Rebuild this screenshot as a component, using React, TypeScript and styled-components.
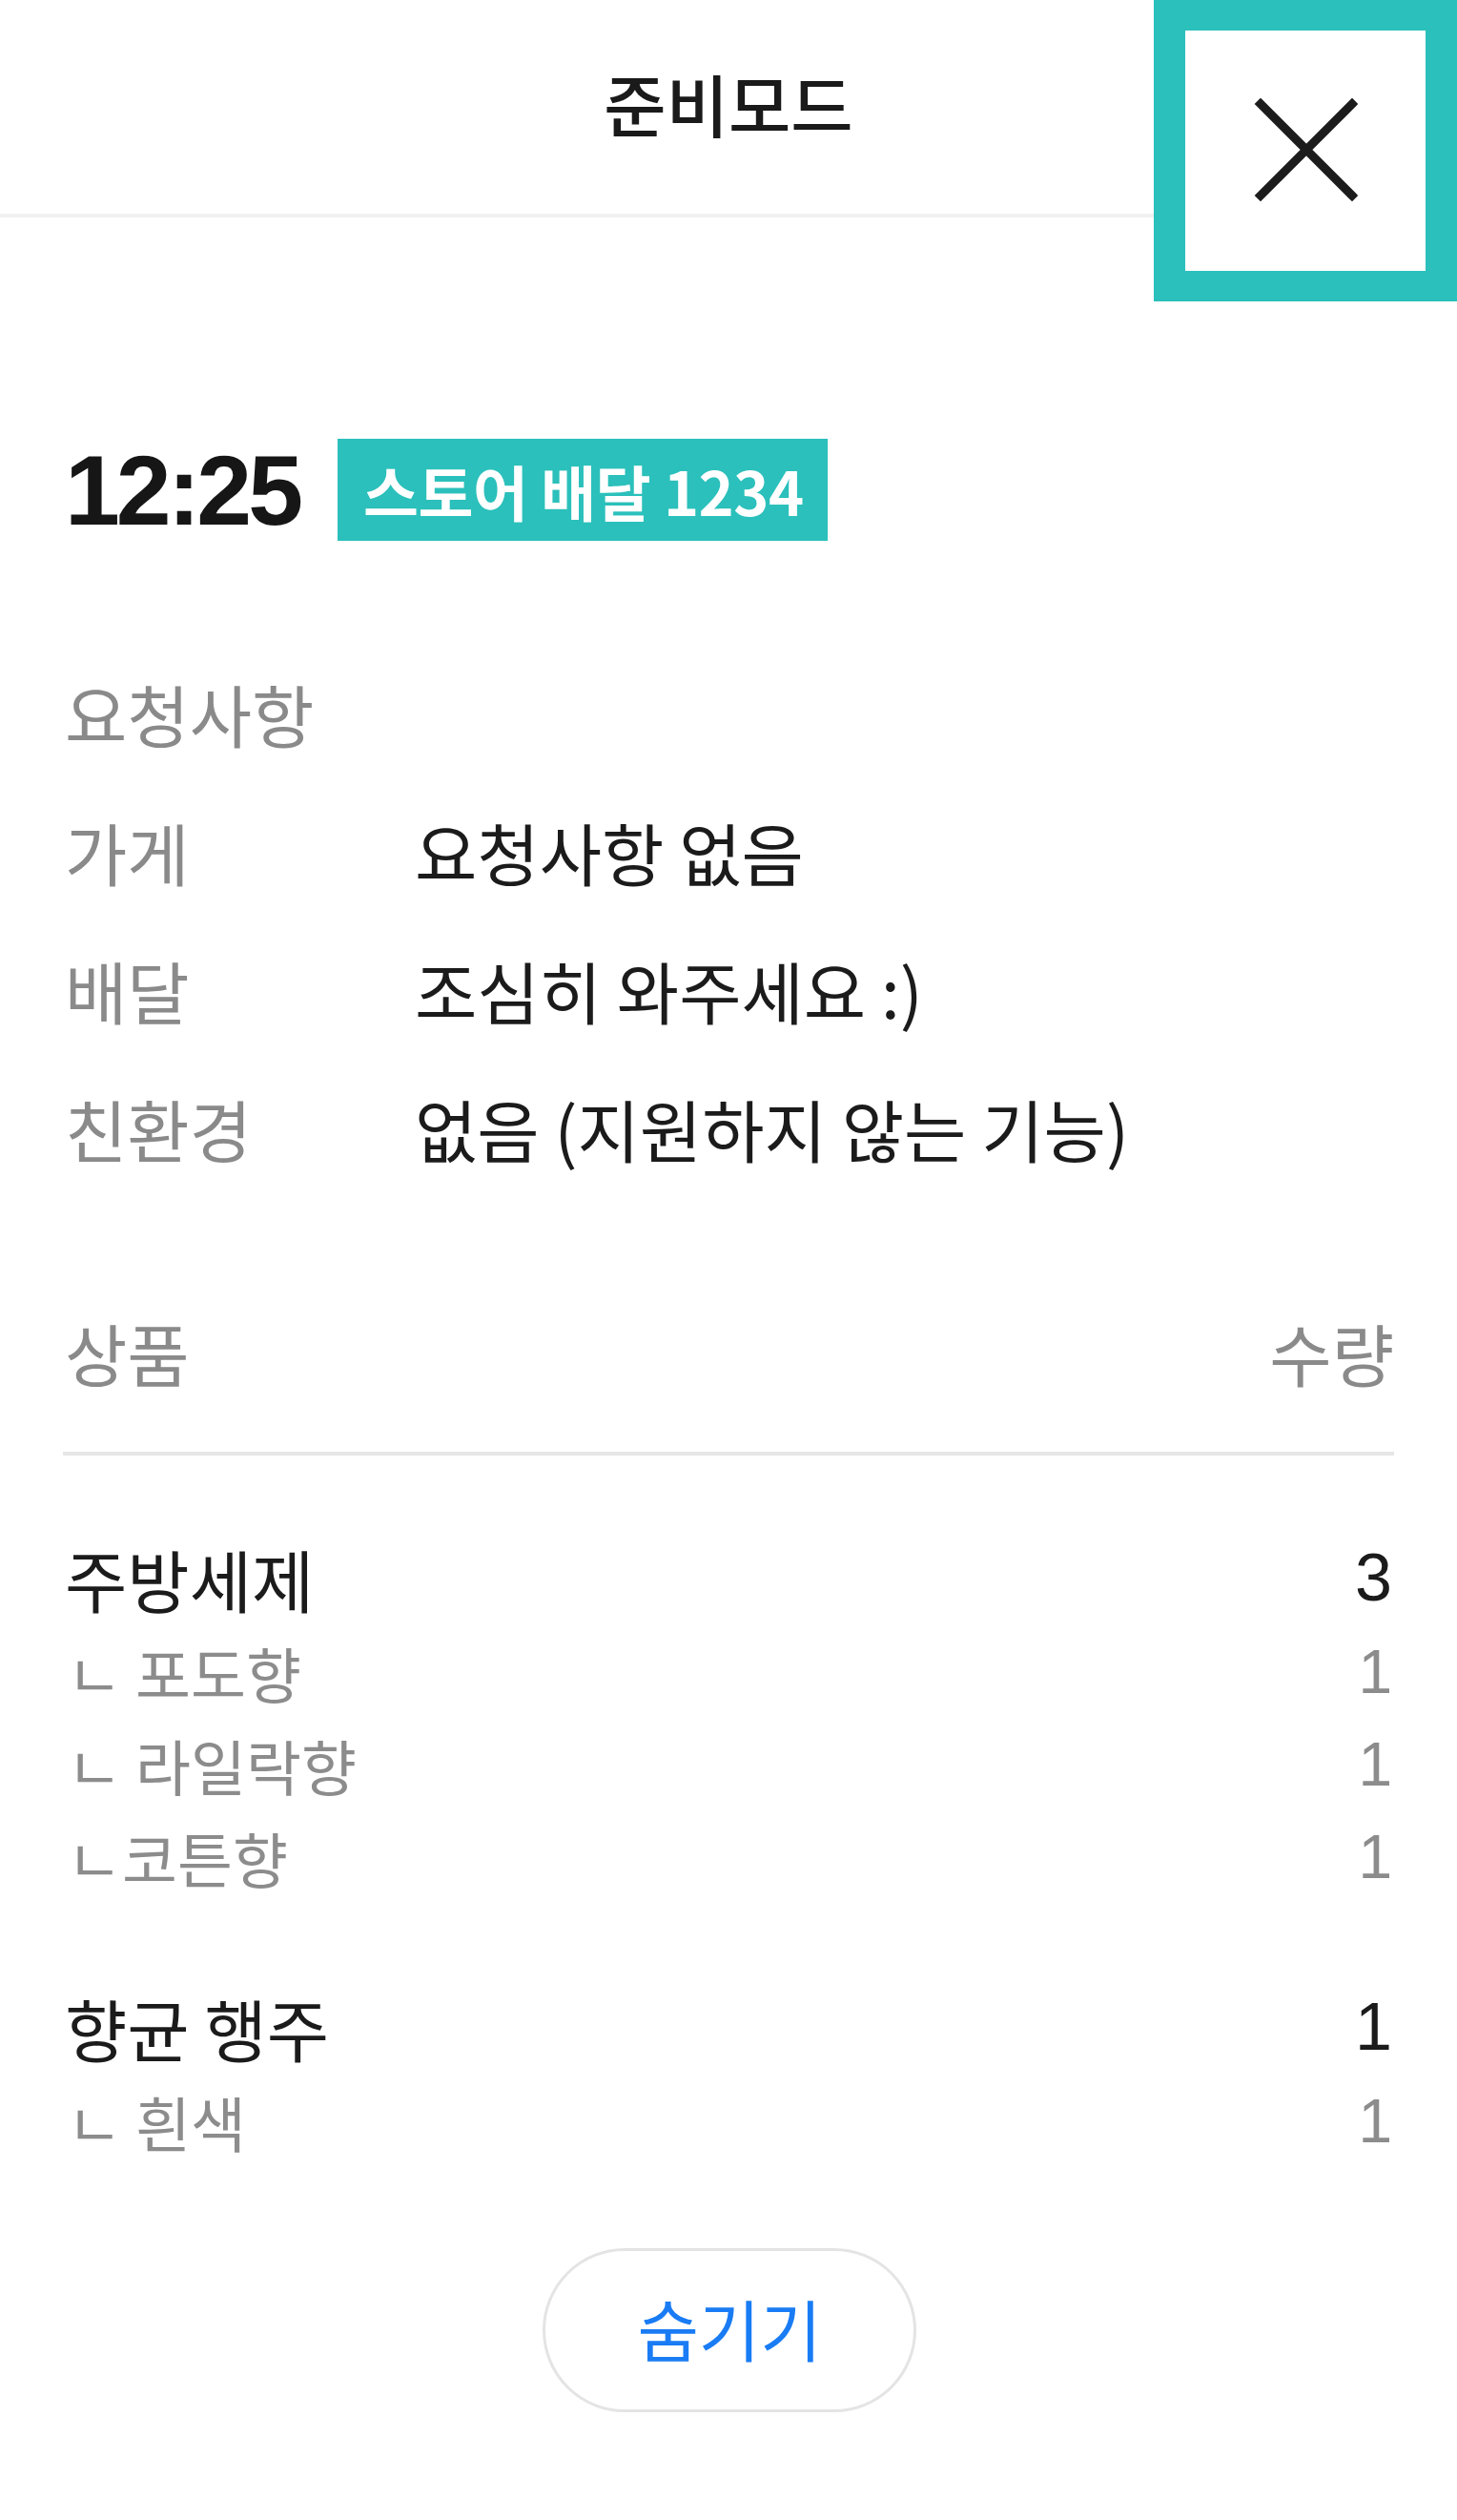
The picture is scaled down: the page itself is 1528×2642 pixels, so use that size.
import React from "react";
import styled, { createGlobalStyle } from "styled-components";

const GlobalStyle = createGlobalStyle`
  html, body {
    margin: 0;
    padding: 0;
    background: #ffffff;
  }
  body {
    font-family: "Noto Sans CJK KR", "Noto Sans", sans-serif;
    color: #1b1b1b;
  }
  * { box-sizing: border-box; }
`;

const Page = styled.div`
  position: relative;
  width: 1528px;
  min-height: 2642px;
  background: #fff;
`;

const Header = styled.header`
  height: 228px;
  border-bottom: 4px solid #f1f1f1;
  display: flex;
  align-items: center;
  justify-content: center;
  padding-bottom: 10px;
`;

const Title = styled.h1`
  margin: 0;
  font-size: 71px;
  font-weight: 500;
  color: #1a1a1a;
  letter-spacing: 0;
`;

const CloseButton = styled.button`
  position: absolute;
  top: 0;
  right: 0;
  width: 318px;
  height: 316px;
  border-style: solid;
  border-color: #2bc0bb;
  border-width: 32px 33px 32px 33px;
  background: #fff;
  display: flex;
  align-items: center;
  justify-content: center;
  padding: 0;
  cursor: pointer;
`;

const Content = styled.main`
  padding: 232px 66px 0 68px;
`;

const TimeRow = styled.div`
  display: flex;
  align-items: center;
  gap: 40px;
  height: 107px;
`;

const Time = styled.span`
  font-family: "Liberation Sans", Arial, sans-serif;
  font-weight: 700;
  font-size: 104px;
  letter-spacing: -4px;
  color: #161616;
  line-height: 1;
`;

const Badge = styled.span`
  height: 107px;
  padding: 0 25px 0 27px;
  background: #2bc0bb;
  color: #fff;
  font-weight: 700;
  font-size: 63px;
  display: flex;
  align-items: center;
  letter-spacing: -0.5px;
`;

const RequestSection = styled.section`
  margin-top: 107px;
  display: grid;
  grid-template-columns: 367px 1fr;
  grid-auto-rows: 145px;
  align-items: center;
`;

const SectionTitle = styled.div`
  grid-column: 1 / -1;
  font-size: 71px;
  color: #8a8a8a;
`;

const Label = styled.div`
  font-size: 71px;
  color: #8a8a8a;
`;

const Value = styled.div`
  font-size: 71px;
  color: #1b1b1b;
`;

const ProductHeader = styled.div`
  margin-top: 113px;
  height: 100px;
  display: flex;
  align-items: center;
  justify-content: space-between;
  font-size: 71px;
  color: #8a8a8a;
`;

const Divider = styled.hr`
  margin: 55px 0 0 -2px;
  border: none;
  height: 4px;
  background: #e6e6e6;
`;

const ItemList = styled.div`
  margin-top: 78px;
  display: flex;
  flex-direction: column;
  gap: 80px;
`;

const ItemGroup = styled.div`
  display: flex;
  flex-direction: column;
`;

const ItemRow = styled.div`
  height: 100px;
  display: flex;
  align-items: center;
  justify-content: space-between;
  font-size: 71px;
  color: #1b1b1b;
`;

const SubRow = styled.div`
  height: 97px;
  display: flex;
  align-items: center;
  justify-content: space-between;
  font-size: 63px;
  color: #8c8c8c;
  padding-left: 2px;
`;

const Qty = styled.span<{ $sub?: boolean }>`
  font-family: "Liberation Sans", Arial, sans-serif;
  font-weight: ${(p) => (p.$sub ? 300 : 400)};
  font-size: ${(p) => (p.$sub ? "64px" : "70px")};
  padding-right: 2px;
`;

const HideButton = styled.button`
  display: flex;
  align-items: center;
  justify-content: center;
  margin: 85px auto 0;
  width: 392px;
  height: 172px;
  border: 3px solid #e4e4e4;
  border-radius: 86px;
  background: #fff;
  color: #1a7cf4;
  font-family: "Noto Sans CJK KR", sans-serif;
  font-size: 70px;
  font-weight: 400;
  padding: 0 0 6px;
  cursor: pointer;
`;

type Item = { name: string; qty: number; options: { name: string; qty: number }[] };

const items: Item[] = [
  {
    name: "주방세제",
    qty: 3,
    options: [
      { name: "ㄴ 포도향", qty: 1 },
      { name: "ㄴ 라일락향", qty: 1 },
      { name: "ㄴ코튼향", qty: 1 },
    ],
  },
  {
    name: "향균 행주",
    qty: 1,
    options: [{ name: "ㄴ 흰색", qty: 1 }],
  },
];

const requests = [
  { label: "가게", value: "요청사항 없음" },
  { label: "배달", value: "조심히 와주세요 :)" },
  { label: "친환경", value: "없음 (지원하지 않는 기능)" },
];

export default function App() {
  return (
    <>
      <GlobalStyle />
      <Page>
        <Header>
          <Title>준비모드</Title>
        </Header>
        <CloseButton aria-label="닫기">
          <svg width="110" height="110" viewBox="0 0 110 110">
            <path
              d="M8 6 L104 102 M104 6 L8 102"
              stroke="#1c1c1c"
              strokeWidth="9"
              strokeLinecap="square"
              fill="none"
            />
          </svg>
        </CloseButton>
        <Content>
          <TimeRow>
            <Time>12:25</Time>
            <Badge>스토어 배달 1234</Badge>
          </TimeRow>

          <RequestSection>
            <SectionTitle>요청사항</SectionTitle>
            {requests.map((r) => (
              <React.Fragment key={r.label}>
                <Label>{r.label}</Label>
                <Value>{r.value}</Value>
              </React.Fragment>
            ))}
          </RequestSection>

          <ProductHeader>
            <span>상품</span>
            <span>수량</span>
          </ProductHeader>
          <Divider />

          <ItemList>
            {items.map((it) => (
              <ItemGroup key={it.name}>
                <ItemRow>
                  <span>{it.name}</span>
                  <Qty>{it.qty}</Qty>
                </ItemRow>
                {it.options.map((o) => (
                  <SubRow key={o.name}>
                    <span>{o.name}</span>
                    <Qty $sub>{o.qty}</Qty>
                  </SubRow>
                ))}
              </ItemGroup>
            ))}
          </ItemList>

          <HideButton>숨기기</HideButton>
        </Content>
      </Page>
    </>
  );
}
